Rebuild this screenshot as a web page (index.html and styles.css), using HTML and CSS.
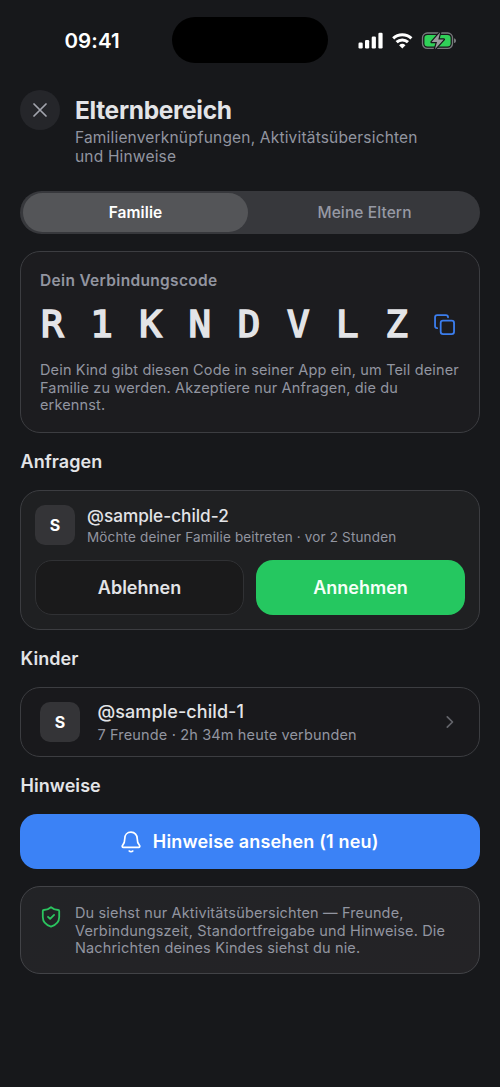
FILE: index.html
```html
<!DOCTYPE html>
<html lang="de">
<head>
<meta charset="utf-8">
<title>Elternbereich</title>
<link rel="stylesheet" href="styles.css">
</head>
<body>
<div class="screen">
  <div class="status">
    <span class="time">09:41</span>
    <span class="island"></span>
    <svg class="status-icons" width="100" height="20" viewBox="0 0 100 20">
      <g fill="#fff">
        <rect x="0.5" y="12.5" width="4.2" height="6" rx="1.2"/>
        <rect x="7" y="10" width="4.200" height="8.500" rx="1.200"/>
        <rect x="13.700" y="6.500" width="4.200" height="12" rx="1.200"/>
        <rect x="20.400" y="2.800" width="4.200" height="15.700" rx="1.200"/>
      </g>
      <g fill="none" stroke="#fff" stroke-width="3">
        <path d="M35.200 8.300a13.200 13.200 0 0 1 18.200 0"/>
        <path d="M38.600 12.200a8.200 8.200 0 0 1 11.400 0"/>
      </g>
      <path d="M44.300 18.500l-3.200-3.300a4.700 4.700 0 0 1 6.400 0z" fill="#fff"/>
      <rect x="64.500" y="3" width="30" height="15.400" rx="4.800" fill="none" stroke="#77797c" stroke-width="1.300"/>
      <path d="M96 8.300c1.500.5 2 1.300 2 2.400s-.5 1.900-2 2.400z" fill="#77797c"/>
      <rect x="66.400" y="4.900" width="26.200" height="11.600" rx="3.200" fill="#30d158"/>
      <path d="M82.200 2.200L73.600 12h5.400l-2.100 7.200L85.800 9.500h-5.500z" fill="#9a9b9d" stroke="#17181b" stroke-width="2.400" paint-order="stroke" stroke-linejoin="round"/>
    </svg>
  </div>

  <header class="header">
    <button class="close" aria-label="Schließen">
      <svg width="14" height="14" viewBox="0 0 14 14" fill="none" stroke="#a2a4ad" stroke-width="1.700" stroke-linecap="round"><path d="M1 1l12 12M13 1L1 13"/></svg>
    </button>
    <div>
      <h1 class="title">Elternbereich</h1>
      <p class="subtitle">Familienverknüpfungen, Aktivitätsübersichten<br>und Hinweise</p>
    </div>
  </header>

  <div class="tabs">
    <div class="tab tab-active">Familie</div>
    <div class="tab">Meine Eltern</div>
  </div>

  <section class="card code-card">
    <div class="code-label">Dein Verbindungscode</div>
    <div class="code-row">
      <span class="code">R1KNDVLZ</span>
      <svg width="21" height="21" viewBox="0 0 22 22" fill="none" stroke="#3b7ded" stroke-width="1.900" stroke-linecap="round" stroke-linejoin="round"><rect x="7" y="7" width="14" height="14" rx="2.500"/><path d="M3.300 14.800C2 14.800 1.100 13.800 1.100 12.600V3.500C1.100 2.100 2.100 1.100 3.500 1.100h8.900c1.300 0 2.300.9 2.300 2.300"/></svg>
    </div>
    <p class="note code-note">Dein Kind gibt diesen Code in seiner App ein, um Teil deiner<br>Familie zu werden. Akzeptiere nur Anfragen, die du<br>erkennst.</p>
  </section>

  <h2 class="heading">Anfragen</h2>
  <section class="card request">
    <div class="person">
      <span class="avatar">S</span>
      <div class="person-text">
        <div class="name">@sample-child-2</div>
        <div class="meta">Möchte deiner Familie beitreten · vor 2 Stunden</div>
      </div>
    </div>
    <div class="actions">
      <button class="btn btn-decline">Ablehnen</button>
      <button class="btn btn-accept">Annehmen</button>
    </div>
  </section>

  <h2 class="heading">Kinder</h2>
  <section class="card child">
    <span class="avatar">S</span>
    <div class="child-text">
      <div class="name name-child">@sample-child-1</div>
      <div class="meta meta-child">7 Freunde · 2h 34m heute verbunden</div>
    </div>
    <svg width="8" height="14" viewBox="0 0 8 14" fill="none" stroke="#64656b" stroke-width="1.700" stroke-linecap="round" stroke-linejoin="round"><path d="M1.300 1.800L6.500 7l-5.200 5.200"/></svg>
  </section>

  <h2 class="heading">Hinweise</h2>
  <button class="btn btn-notices">
    <svg width="20" height="22" viewBox="0 0 20 22" fill="none" stroke="#fff" stroke-width="1.700" stroke-linecap="round" stroke-linejoin="round"><path d="M10 1.200c-3.900 0-6.200 2.900-6.200 6.300 0 4.200-1 5.500-2.200 6.800-.8.900-.4 2 .8 2h15.200c1.200 0 1.600-1.100.8-2-1.200-1.300-2.200-2.600-2.200-6.800 0-3.400-2.300-6.300-6.200-6.300zM8.200 20c.9.900 2.700.9 3.600 0"/></svg>
    <span>Hinweise ansehen (1 neu)</span>
  </button>

  <section class="card info">
    <svg width="20" height="22" viewBox="0 0 20 22" fill="none" stroke="#2bc45f" stroke-width="1.800" stroke-linecap="round" stroke-linejoin="round"><path d="M10 1.200C8 2.900 5 4 2.800 4 2.200 4 1.800 4.400 1.800 5v6c0 5 3.200 8 8.200 9.600 5-1.600 8.200-4.600 8.200-9.600V5c0-.6-.4-1-1-1C15 4 12 2.900 10 1.200zM7 10.800l2.100 2.100 4-4"/></svg>
    <p class="note info-note">Du siehst nur Aktivitätsübersichten — Freunde,<br>Verbindungszeit, Standortfreigabe und Hinweise. Die<br>Nachrichten deines Kindes siehst du nie.</p>
  </section>
</div>
</body>
</html>
```
FILE: styles.css
```css
* { box-sizing: border-box; }
body { margin: 0; background: #17181b; }
h1, h2, p { margin: 0; }
button { font: inherit; border: 0; padding: 0; }

.screen {
  width: 500px;
  height: 1087px;
  padding: 0 20px;
  overflow: hidden;
  background: #17181b;
  color: #e3e4e7;
  font-family: Inter, "Liberation Sans", sans-serif;
  white-space: nowrap;
}

.status {
  height: 90px;
  padding: 17px 4px 27px 44.500px;
  display: grid;
  grid-template-columns: 107.500px 156px 1fr;
  align-items: center;
}
.time { color: #fff; font-size: 20.500px; font-weight: 600; letter-spacing: 0.100px; }
.island { height: 46px; border-radius: 23px; background: #000; }
.status-icons { margin-left: 30px; }

.header { display: flex; gap: 15px; height: 101px; }
.close {
  width: 40px;
  height: 40px;
  border-radius: 50%;
  background: #25262a;
  display: grid;
  place-items: center;
}
.title { padding-top: 4px; font-size: 24.500px; line-height: 32px; font-weight: 700; letter-spacing: -0.330px; }
.subtitle { padding-top: 2px; color: #9295a0; font-size: 15.500px; line-height: 19px; letter-spacing: 0.180px; }

.tabs {
  display: grid;
  grid-template-columns: 1fr 1fr;
  gap: 4px;
  height: 43px;
  padding: 2px 3px;
  border-radius: 22px;
  background: #37383c;
}
.tab {
  display: grid;
  place-items: center;
  border-radius: 20px;
  color: #9699a4;
  font-size: 15.500px;
  font-weight: 500;
  letter-spacing: 0.100px;
}
.tab-active { background: #545558; color: #fff; font-weight: 600; }

.card {
  border: 1px solid #3c3d41;
  border-radius: 20px;
  background: #1c1c1f;
}
.code-card { height: 182px; margin-top: 17px; padding: 18px 19px; }
.code-label { color: #9295a0; font-size: 15.500px; line-height: 22px; font-weight: 600; letter-spacing: 0.320px; }
.code-row { display: flex; align-items: center; justify-content: space-between; height: 64px; padding-right: 5px; }
.code {
  width: 380px;
  margin-left: 1px;
  font-family: "DejaVu Sans Mono", monospace;
  font-size: 37.500px;
  line-height: 50px;
  letter-spacing: 26.600px;
  -webkit-text-stroke: 1.700px currentColor;
}
.note { color: #9295a0; font-size: 14.500px; line-height: 17.700px; letter-spacing: 0.150px; }
.code-note { padding-top: 5px; }

.heading { height: 57px; padding-left: 0.500px; font-size: 18px; line-height: 57px; font-weight: 600; letter-spacing: 0.050px; }

.request { height: 140px; padding: 14px; background: #1f2022; }
.person { display: flex; align-items: center; gap: 12px; height: 40px; }
.person-text { padding-top: 2px; }
.avatar {
  display: grid;
  place-items: center;
  width: 40px;
  height: 40px;
  border-radius: 10px;
  background: #343437;
  color: #fff;
  font-size: 16px;
  font-weight: 700;
}
.name { font-size: 17.200px; line-height: 22px; font-weight: 500; }
.meta { color: #9295a0; font-size: 13.500px; line-height: 20px; letter-spacing: 0.150px; }
.actions { display: grid; grid-template-columns: 1fr 1fr; gap: 12px; margin-top: 15px; }
.btn { height: 55px; border-radius: 17px; font-size: 18px; font-weight: 600; }
.btn-decline { border: 1px solid #303134; background: #1a1a1b; color: #e3e4e7; }
.btn-accept { background: #25c760; color: #f5fff8; }

.child { display: flex; align-items: center; height: 70px; padding: 0 25px 0 19px; background: #19191c; }
.child-text { flex: 1; padding: 2px 0 0 17.500px; }
.name-child { font-size: 18px; line-height: 23px; letter-spacing: 0.080px; }
.meta-child { font-size: 14.500px; line-height: 24px; }

.btn-notices {
  display: flex;
  align-items: center;
  justify-content: center;
  gap: 11.500px;
  width: 100%;
  background: #3b82f6;
  color: #fff;
  letter-spacing: 0.170px;
}
.info { display: flex; gap: 14px; height: 88px; margin-top: 17px; padding: 17px 19px; background: linear-gradient(165deg, #222326, #242326); border-color: #424347; }
.info svg { margin: 2px 0 0 1px; }
```
